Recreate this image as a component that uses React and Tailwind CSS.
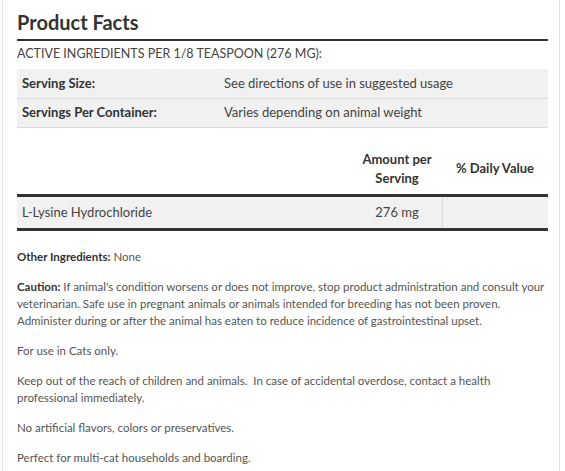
const font = { fontFamily: 'Lato, "Open Sans", sans-serif' }

const servingRows = [
  { label: 'Serving Size:', value: 'See directions of use in suggested usage' },
  { label: 'Servings Per Container:', value: 'Varies depending on animal weight' },
]

export default function App() {
  return (
    <div className="h-[471px] w-[565px] bg-white text-[#444]" style={font}>
      <div className="ml-[2px] mr-[5px] h-full border-x border-[#e3e3e3] pl-[14px] pr-[11px] pt-[8px]">
        <h2 className="text-[20px] font-bold leading-[28px] text-[#333]">Product Facts</h2>
        <div className="mt-[3px] h-[2px] bg-[#333]" />
        <div className="mt-[4px] text-[12.5px] leading-[17px] text-[#444]">ACTIVE INGREDIENTS PER 1/8 TEASPOON (276 MG):</div>

        <div className="mt-[7px] border-b border-[#dcdcdc]">
          {servingRows.map((r, i) => (
            <div key={i} className={`flex h-[29px] items-center bg-[#f1f1f1] text-[13px] ${i > 0 ? 'border-t border-[#dcdcdc]' : ''}`}>
              <div className="w-[207px] pl-[5px] font-bold text-[#333]">{r.label}</div>
              <div className="text-[#444]">{r.value}</div>
            </div>
          ))}
        </div>

        <div className="mt-[18px] flex h-[46px] items-center text-[13px] font-bold text-[#333]">
          <div className="flex-1" />
          <div className="w-[90px] text-center leading-[19px]">Amount per<br />Serving</div>
          <div className="w-[106px] text-center">% Daily Value</div>
        </div>
        <div className="mt-[2px] border-y-[3px] border-[#333]">
          <div className="flex h-[31px] items-center bg-[#f1f1f1] text-[13px] text-[#444]">
            <div className="flex-1 pl-[5px]">L-Lysine Hydrochloride</div>
            <div className="w-[90px] text-center">276 mg</div>
            <div className="h-full w-[106px] border-l border-[#dcdcdc]" />
          </div>
        </div>

        <div className="mt-[17px] space-y-[13px] text-[11.5px] leading-[17px] text-[#555]">
          <p><span className="font-bold text-[#333]">Other Ingredients:</span> None</p>
          <p><span className="font-bold text-[#333]">Caution:</span> If animal's condition worsens or does not improve, stop product administration and consult your veterinarian. Safe use in pregnant animals or animals intended for breeding has not been proven. Administer during or after the animal has eaten to reduce incidence of gastrointestinal upset.</p>
          <p>For use in Cats only.</p>
          <p>Keep out of the reach of children and animals.&nbsp; In case of accidental overdose, contact a health professional immediately.</p>
          <p>No artificial flavors, colors or preservatives.</p>
          <p>Perfect for multi-cat households and boarding.</p>
        </div>
      </div>
    </div>
  )
}
